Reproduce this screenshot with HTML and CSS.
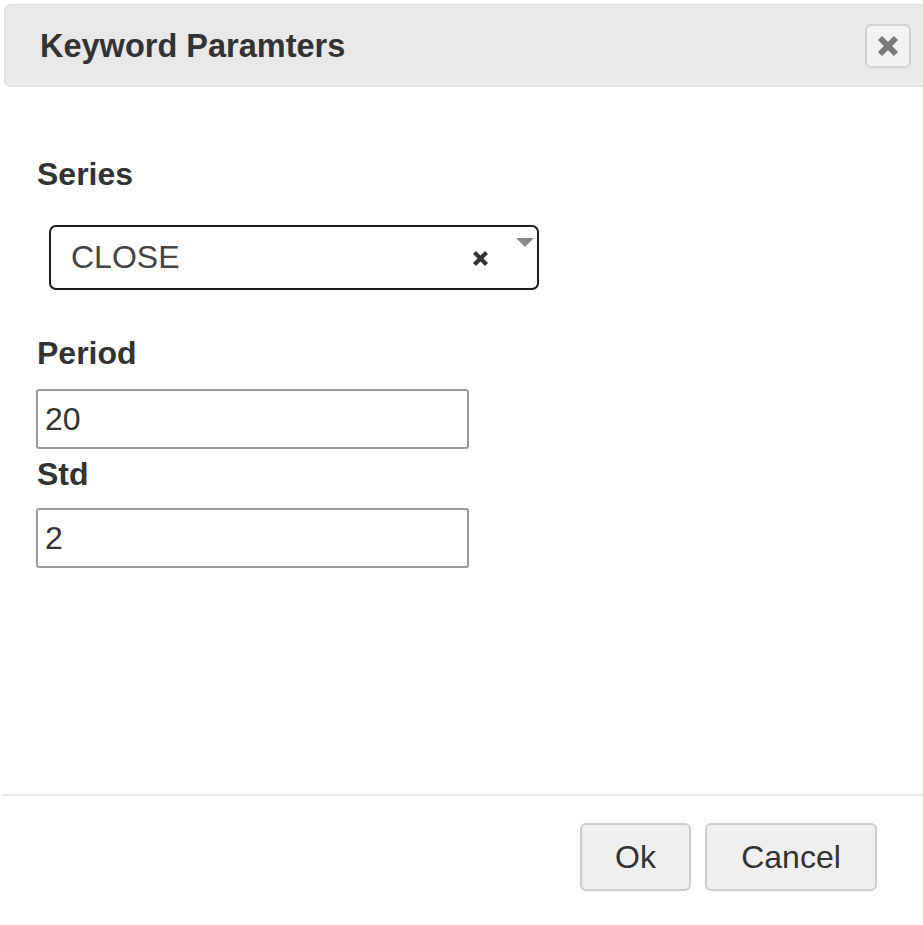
FILE: index.html
```html
<!DOCTYPE html>
<html>
<head>
<meta charset="utf-8">
<link rel="stylesheet" href="styles.css">
</head>
<body>
<div class="modal">
  <div class="modal-header">
    <h4 class="modal-title">Keyword Paramters</h4>
    <button class="close-btn" type="button" aria-label="Close">
      <svg width="24" height="22" viewBox="0 0 24 22"><path d="M4 3 L20 19 M20 3 L4 19" stroke="#7a7a7a" stroke-width="6" stroke-linecap="butt" fill="none"/></svg>
    </button>
  </div>
  <div class="modal-body">
    <label class="field-label series-label">Series</label>
    <div class="select">
      <span class="select-value">CLOSE</span>
      <svg class="select-clear" width="17" height="17" viewBox="0 0 17 17"><path d="M2.5 2.5 L14.5 14.5 M14.5 2.5 L2.5 14.5" stroke="#333" stroke-width="4.2" fill="none"/></svg>
      <svg class="select-arrow" width="18" height="10" viewBox="0 0 18 10"><path d="M0 0 H18 L9 9 Z" fill="#888"/></svg>
    </div>
    <label class="field-label period-label">Period</label>
    <input class="text-input period-input" type="text" value="20">
    <label class="field-label std-label">Std</label>
    <input class="text-input std-input" type="text" value="2">
  </div>
  <div class="modal-footer">
    <button class="btn" type="button">Ok</button>
    <button class="btn btn-cancel" type="button">Cancel</button>
  </div>
</div>
</body>
</html>
```

FILE: styles.css
```css
html, body {
  margin: 0;
  padding: 0;
  background: #ffffff;
  overflow: hidden;
}
body {
  font-family: "Liberation Sans", Arial, sans-serif;
  color: #333333;
}
.modal {
  margin: 4px 0 0 4px;
  width: 930px;
}
.modal-header {
  box-sizing: border-box;
  height: 83px;
  background: #e8e8e8;
  border: 1px solid #dcdcdc;
  border-radius: 6px 0 0 6px;
  display: flex;
  align-items: center;
  justify-content: space-between;
  padding: 0 22px 0 35px;
}
.modal-title {
  margin: 0;
  font-size: 32.5px;
  font-weight: bold;
  color: #333333;
  line-height: 40px;
}
.close-btn {
  box-sizing: border-box;
  width: 46px;
  height: 44px;
  margin-top: 1px;
  background: #f2f2f2;
  border: 2px solid #d2d2d2;
  border-radius: 6px;
  padding: 0;
  display: flex;
  align-items: center;
  justify-content: center;
}
.modal-body {
  box-sizing: border-box;
  height: 707px;
  padding: 67px 0 0 33px;
  display: flex;
  flex-direction: column;
  align-items: flex-start;
}
.field-label {
  display: block;
  font-size: 32px;
  font-weight: bold;
  line-height: 40px;
  color: #333333;
}
.select {
  box-sizing: border-box;
  margin: 31px 0 0 12px;
  width: 490px;
  height: 65px;
  border: 2.5px solid #1c1c1c;
  border-radius: 7px;
  display: flex;
  align-items: center;
  padding: 0 3px 0 20px;
}
.select-value {
  flex: 1;
  font-size: 32px;
  color: #444444;
}
.select-clear {
  margin-top: 1px;
}
.select-arrow {
  align-self: flex-start;
  margin: 11px 0 0 27px;
}
.period-label {
  margin-top: 43px;
}
.text-input {
  box-sizing: border-box;
  width: 433px;
  height: 60px;
  margin: 16px 0 0 -1px;
  border: 2px solid #9a9a9a;
  border-radius: 3px;
  padding: 0 0 0 7px;
  font-family: "Liberation Sans", Arial, sans-serif;
  font-size: 32px;
  color: #333333;
  background: #ffffff;
  outline: none;
}
.std-label {
  margin-top: 5px;
}
.std-input {
  margin-top: 14px;
}
.modal-footer {
  border-top: 2px solid #e6e6e6;
  margin-left: -1px;
  padding: 27px 57px 0 0;
  display: flex;
  justify-content: flex-end;
  gap: 14px;
}
.btn {
  box-sizing: border-box;
  height: 68px;
  width: 111px;
  background: #efefef;
  border: 2px solid #cccccc;
  border-radius: 6px;
  font-family: "Liberation Sans", Arial, sans-serif;
  font-size: 32px;
  color: #333333;
  padding: 0;
}
.btn-cancel {
  width: 172px;
}
```
